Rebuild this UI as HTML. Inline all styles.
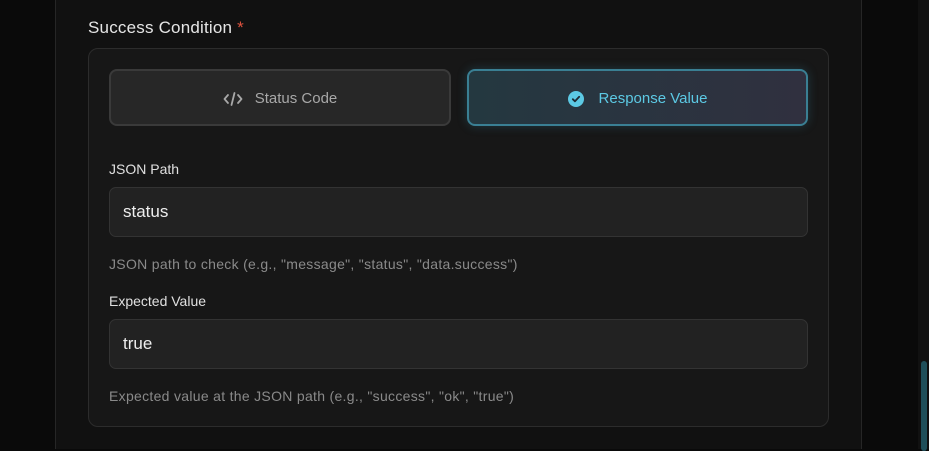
<!DOCTYPE html>
<html><head><style>
*{box-sizing:border-box;margin:0;padding:0}
body{width:929px;height:449px;background:#0a0a0a;font-family:"Liberation Sans",sans-serif;position:relative;overflow:hidden}
.panel{position:absolute;left:55px;top:0;width:807px;height:449px;background:#111;border-left:1px solid #262626;border-right:1px solid #262626}
.abs{position:absolute}
.title{left:88px;top:18px;font-size:17px;color:#e5e5e5;letter-spacing:.2px}
.card{left:88px;top:48px;width:741px;height:379px;background:#171717;border:1px solid #2c2c2c;border-radius:10px}
.btn{top:69px;height:57px;border-radius:8px;display:flex;align-items:center;justify-content:center;font-size:15px;padding-top:2px}
.b1{left:109px;width:342px;background:#272727;border:2px solid #3a3a3a;color:#a8a8a8}
.b2{left:467px;width:341px;background:linear-gradient(90deg,#243840,#30303f);border:2px solid #3a7f93;color:#5cc9e4;box-shadow:0 0 10px rgba(60,160,190,.25)}
.lbl{font-size:14px;color:#e0e0e0}
.inp{left:109px;width:699px;height:50px;background:#222;border:1px solid #333;border-radius:7px;padding-left:13px;display:flex;align-items:center;font-size:17px;color:#eee}
.help{font-size:14px;color:#8a8a8a;letter-spacing:.3px}
</style></head><body>
<div class="panel"></div>
<div class="abs" style="left:918px;top:0;width:11px;height:449px;background:#111"></div>
<div class="abs" style="left:921px;top:361px;width:6px;height:90px;background:#1f4f5a;border-radius:3px"></div>
<div class="abs title">Success Condition <span style="color:#e0533f">*</span></div>
<div class="abs card"></div>
<div class="abs btn b1"><svg width="20" height="16" viewBox="0 0 20 16" style="margin-right:12px"><path d="M5 4L1.5 8L5 12M15 4L18.5 8L15 12M11.5 2L8.5 14" stroke="#a8a8a8" stroke-width="1.8" fill="none" stroke-linecap="round" stroke-linejoin="round"/></svg>Status Code</div>
<div class="abs btn b2"><svg width="16" height="16" viewBox="0 0 16 16" style="margin-right:15px"><circle cx="8" cy="8" r="8" fill="#5cc9e4"/><path d="M4.8 8.2L7 10.3L11.2 5.8" stroke="#1e2a33" stroke-width="1.8" fill="none" stroke-linecap="round" stroke-linejoin="round"/></svg>Response Value</div>
<div class="abs lbl" style="left:109px;top:161px">JSON Path</div>
<div class="abs inp" style="top:187px">status</div>
<div class="abs help" style="left:109px;top:256px">JSON path to check (e.g., "message", "status", "data.success")</div>
<div class="abs lbl" style="left:109px;top:293px">Expected Value</div>
<div class="abs inp" style="top:319px">true</div>
<div class="abs help" style="left:109px;top:388px">Expected value at the JSON path (e.g., "success", "ok", "true")</div>
</body></html>
